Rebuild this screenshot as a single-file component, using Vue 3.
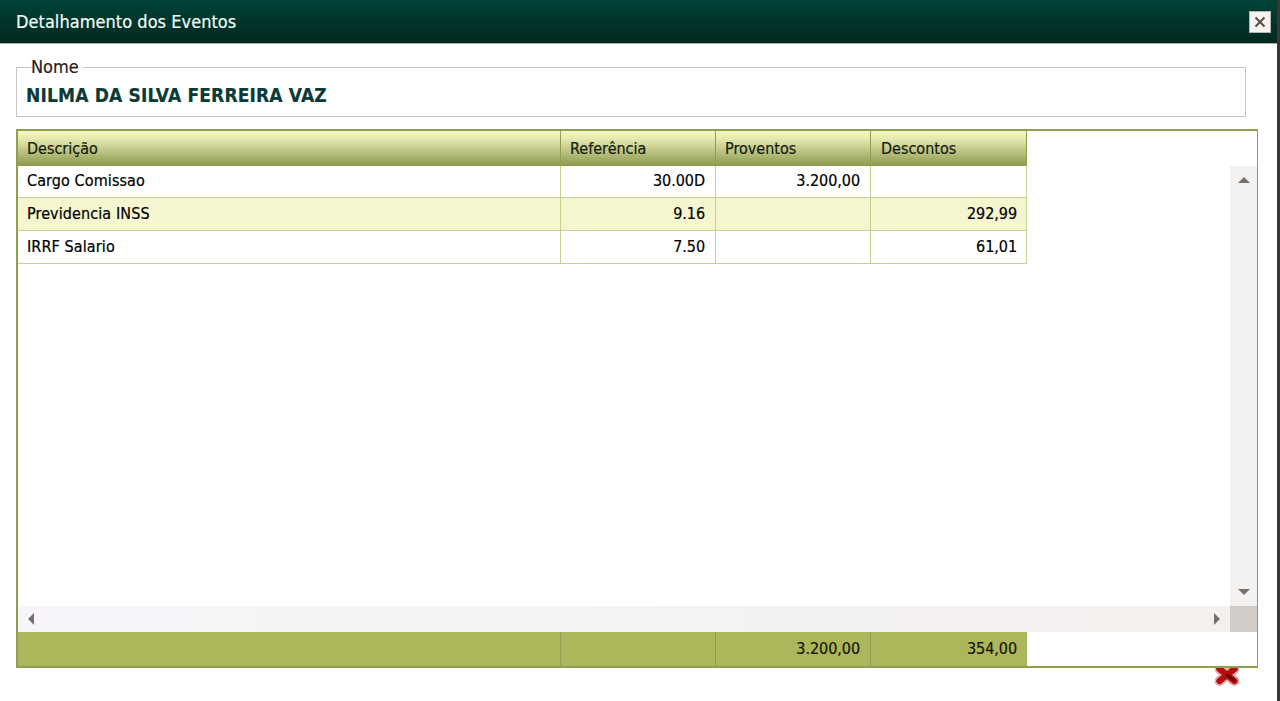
<script setup>
const cols = [
  { label: 'Descrição', width: 543 },
  { label: 'Referência', width: 155 },
  { label: 'Proventos', width: 155 },
  { label: 'Descontos', width: 156 }
]
const rows = [
  { d: 'Cargo Comissao', r: '30.00D', p: '3.200,00', v: '', h: 32 },
  { d: 'Previdencia INSS', r: '9.16', p: '', v: '292,99', h: 33 },
  { d: 'IRRF Salario', r: '7.50', p: '', v: '61,01', h: 33 }
]
</script>

<template>
  <div class="page">
    <header class="title">
      <span>Detalhamento dos Eventos</span>
      <button class="close" aria-label="Fechar">
        <svg width="12" height="12" viewBox="0 0 12 12"><path d="M1.500 1.500l9 9M10.500 1.500l-9 9" stroke="#5d4a48" stroke-width="2" fill="none" /></svg>
      </button>
    </header>
    <fieldset class="name">
      <legend>Nome</legend>
      <div>NILMA DA SILVA FERREIRA VAZ</div>
    </fieldset>
    <section class="grid">
      <div class="head row">
        <div v-for="c in cols" :key="c.label" class="cell" :style="{ width: c.width + 'px' }">{{ c.label }}</div>
      </div>
      <div class="middle">
        <div class="body">
          <div v-for="(r, i) in rows" :key="r.d" class="row data" :class="{ alt: i === 1 }" :style="{ height: r.h + 'px' }">
            <div class="cell" style="width: 543px">{{ r.d }}</div>
            <div class="cell num" style="width: 155px">{{ r.r }}</div>
            <div class="cell num" style="width: 155px">{{ r.p }}</div>
            <div class="cell num" style="width: 156px">{{ r.v }}</div>
          </div>
        </div>
        <div class="vbar">
          <svg width="12" height="8" viewBox="0 0 12 8"><path d="M6 1l6 6H0z" fill="#77706f" /></svg>
          <svg width="12" height="8" viewBox="0 0 12 8"><path d="M6 7l6-6H0z" fill="#77706f" /></svg>
        </div>
      </div>
      <div class="hbar">
        <div class="track">
          <svg width="8" height="12" viewBox="0 0 8 12"><path d="M1 6l6-6v12z" fill="#77706f" /></svg>
          <svg width="8" height="12" viewBox="0 0 8 12"><path d="M7 6L1 0v12z" fill="#77706f" /></svg>
        </div>
        <div class="corner"></div>
      </div>
      <div class="foot row">
        <div class="cell" style="width: 543px"></div>
        <div class="cell" style="width: 155px"></div>
        <div class="cell num" style="width: 155px">3.200,00</div>
        <div class="cell num" style="width: 156px">354,00</div>
      </div>
    </section>
    <div class="actions">
      <svg width="28" height="20" viewBox="0 0 28 20">
        <path d="M6.500 1l15 12M21.500 1l-15 12" stroke="#d98a8a" stroke-width="9.500" stroke-linecap="round" fill="none" />
        <path d="M6.500 1l15 12M21.500 1l-15 12" stroke="#f3d5d5" stroke-width="8" stroke-linecap="round" fill="none" />
        <path d="M6.500 1l15 12M21.500 1l-15 12" stroke="#b30f12" stroke-width="6.500" stroke-linecap="round" fill="none" />
        <path d="M14 7l6.500 5" stroke="#6e0506" stroke-width="3" stroke-linecap="round" fill="none" />
      </svg>
    </div>
  </div>
</template>

<style>
html, body { margin: 0; background: #fff; }
</style>

<style scoped>
.page {
  box-sizing: border-box;
  width: 1280px;
  height: 701px;
  overflow: hidden;
  background: #fff;
  font-family: "DejaVu Sans Condensed", "DejaVu Sans", sans-serif;
  font-stretch: condensed;
  font-size: 16px;
  color: #000;
  -webkit-text-stroke: 0.2px currentColor;
  border-right: 3px solid #3c3633;
}
.title {
  box-sizing: border-box;
  height: 44px;
  padding: 0 6px 0 16px;
  display: flex;
  align-items: center;
  justify-content: space-between;
  background: linear-gradient(#004238, #00281f);
  border-bottom: 1px solid #a5b3a5;
  color: #f2fbf6;
  font-size: 18px;
  letter-spacing: 0.04px;
}
.close {
  width: 22px;
  height: 22px;
  padding: 0;
  display: flex;
  align-items: center;
  justify-content: center;
  background: #f7f4f0;
  border: 1px solid #b9b5ae;
}
.name {
  box-sizing: border-box;
  width: 1230px;
  height: 60px;
  margin: 13px 0 0 16px;
  padding: 0 0 0 9px;
  border: 1px solid #c9c2c2;
  border-radius: 0;
  min-width: 0;
}
.name legend {
  margin-left: 5px;
  padding: 0 3px 0 0;
  font-size: 18px;
  line-height: 20px;
  color: #2a1c1c;
}
.name div {
  font-size: 19px;
  line-height: 22px;
  font-weight: bold;
  color: #0c3a38;
  margin-top: 7px;
  letter-spacing: 0.15px;
}
.grid {
  box-sizing: border-box;
  width: 1242px;
  height: 539px;
  margin: 12px 0 0 16px;
  display: flex;
  flex-direction: column;
  border: 1px solid #8f9f50;
  border-width: 2px 1px 2px 2px;
}
.row { display: flex; }
.cell {
  box-sizing: border-box;
  padding: 0 10px 2px 9px;
  display: flex;
  align-items: center;
  border-right: 1px solid #c6d08e;
  white-space: nowrap;
  letter-spacing: 0.1px;
}
.cell:last-child { padding: 0 9px 2px 10px; }
.num { justify-content: flex-end; letter-spacing: -0.05px; }
.head { height: 35px; width: 1009px; }
.head .cell {
  background: linear-gradient(#f5f6c8, #e4e7ac 25%, #8f9b52);
  border-right: 1px solid #8f9f50;
  border-bottom: 1px solid #8f9f50;
  padding-bottom: 0;
  color: #14200e;
  letter-spacing: 0;
}
.middle {
  flex: 1;
  min-height: 0;
  display: flex;
}
.body { flex: 1; }
.data { width: 1009px; box-sizing: border-box; border-bottom: 1px solid #c6d08e; }
.alt { background: #f5f6d0; }
.vbar {
  width: 27px;
  display: flex;
  flex-direction: column;
  justify-content: space-between;
  align-items: center;
  box-sizing: border-box;
  padding: 10px 0 10px;
  background: #f3f1f0;
}
.hbar { display: flex; height: 26px; }
.track {
  flex: 1;
  display: flex;
  justify-content: space-between;
  align-items: center;
  padding: 0 9px;
  background: linear-gradient(90deg, #f8f5fa, #f3f0ee);
}
.corner { width: 27px; background: #d1ccc7; }
.foot {
  height: 34px;
  width: 1009px;
  background: #adb65a;
}
.foot .cell {
  border-right-color: #8f9f50;
  color: #11170a;
}
.foot .cell:last-child { border-right-color: #adb65a; }
.actions {
  display: flex;
  justify-content: flex-end;
  padding-right: 36px;
}
</style>
